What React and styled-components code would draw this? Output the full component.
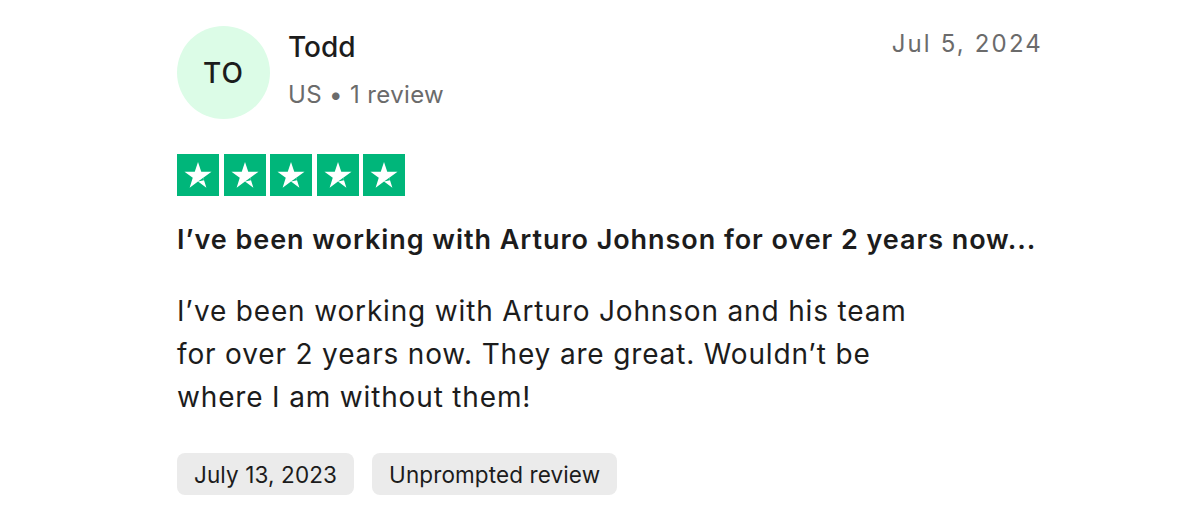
import React from 'react';
import styled, { createGlobalStyle } from 'styled-components';

const GlobalStyle = createGlobalStyle`
  html, body {
    margin: 0;
    padding: 0;
    background: #ffffff;
  }
  body {
    font-family: 'Inter', 'Noto Sans', sans-serif;
    color: #1c1c1c;
  }
`;

const Card = styled.article`
  width: 866px;
  padding: 26px 0 0 177px;
`;

const Header = styled.div`
  display: flex;
  justify-content: space-between;
  align-items: flex-start;
`;

const Consumer = styled.div`
  display: flex;
  align-items: flex-start;
  gap: 18px;
`;

const Avatar = styled.div`
  width: 93px;
  height: 93px;
  border-radius: 50%;
  background: #dcfce7;
  display: flex;
  align-items: center;
  justify-content: center;
  font-size: 28px;
  font-weight: 500;
  letter-spacing: 0.04em;
  color: #1c1c1c;
`;

const Info = styled.div`
  display: flex;
  flex-direction: column;
  gap: 16px;
  padding-top: 4px;
`;

const Name = styled.div`
  font-size: 28px;
  font-weight: 500;
  line-height: 34px;
`;

const Meta = styled.div`
  font-size: 24px;
  letter-spacing: 0.015em;
  color: #6b6b6b;
  line-height: 30px;
`;

const Posted = styled.div`
  font-size: 24px;
  letter-spacing: 0.09em;
  color: #6b6b6b;
  line-height: 30px;
  margin-top: 3px;
`;

const Stars = styled.div`
  display: flex;
  gap: 4.5px;
  margin-top: 35px;
`;

const StarBox = styled.div`
  width: 42px;
  height: 42px;
  background: #00b67a;
  display: flex;
  align-items: center;
  justify-content: center;
`;

const Title = styled.h2`
  margin: 27px 0 0;
  font-size: 27px;
  font-weight: 600;
  letter-spacing: 0.035em;
  line-height: 34px;
  color: #1c1c1c;
`;

const Body = styled.p`
  margin: 33px 0 0;
  font-size: 28px;
  letter-spacing: 0.03em;
  line-height: 43px;
  max-width: 760px;
  color: #1c1c1c;
`;

const Tags = styled.div`
  display: flex;
  gap: 18px;
  margin-top: 34px;
`;

const Tag = styled.span`
  display: inline-flex;
  align-items: center;
  height: 42px;
  padding: 0 17px;
  border-radius: 8px;
  background: #ebebeb;
  font-size: 22.5px;
  letter-spacing: 0.005em;
  color: #1c1c1c;
`;

const Star = () => (
  <svg width="30" height="30" viewBox="0 0 24 24">
    <polygon
      fill="#ffffff"
      points="12,1.5 14.6,9.3 22.8,9.3 16.2,14.2 18.7,22.1 12,17.2 5.3,22.1 7.8,14.2 1.2,9.3 9.4,9.3"
    />
    <polygon fill="#00b67a" points="16.2,14.2 16.8,16.2 12,17.2 12,17.2" />
  </svg>
);

export default function App() {
  return (
    <>
      <GlobalStyle />
      <Card>
        <Header>
          <Consumer>
            <Avatar>TO</Avatar>
            <Info>
              <Name>Todd</Name>
              <Meta>US • 1 review</Meta>
            </Info>
          </Consumer>
          <Posted>Jul 5, 2024</Posted>
        </Header>
        <Stars>
          {[0, 1, 2, 3, 4].map((i) => (
            <StarBox key={i}>
              <Star />
            </StarBox>
          ))}
        </Stars>
        <Title>I’ve been working with Arturo Johnson for over 2 years now...</Title>
        <Body>
          I’ve been working with Arturo Johnson and his team for over 2 years now. They are great. Wouldn’t be where I am without them!
        </Body>
        <Tags>
          <Tag>July 13, 2023</Tag>
          <Tag>Unprompted review</Tag>
        </Tags>
      </Card>
    </>
  );
}
